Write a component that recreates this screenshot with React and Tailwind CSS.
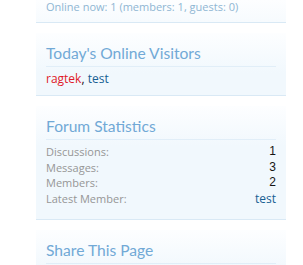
export default function App() {
  const panel =
    "mx-[36px] w-[250px] border-b border-[#d9e9f5] bg-[linear-gradient(to_bottom,#fdfeff_0px,#f1f8fd_40px)] px-[10px]";
  const heading =
    "border-b border-[#e1eef8] pb-[3px] font-['Lato','Open_Sans',sans-serif] text-[15.6px] leading-[20px] text-[#71a9d6]";
  const label = "text-[#969696]";
  const value = "text-[#141414] font-['Liberation_Sans',Arial,sans-serif] text-[12px]";
  return (
    <div className="h-[265px] w-[303px] overflow-hidden bg-white font-['Open_Sans','Liberation_Sans',sans-serif]">
      <div className={panel + " pb-[8px]"}>
        <div className="text-[11px] leading-[14px] text-[#8fb6d3]">
          Online now: 1 (members: 1, guests: 0)
        </div>
      </div>

      <div className={panel + " mt-[10px] pb-[8px] pt-[10px]"}>
        <h3 className={heading}>Today's Online Visitors</h3>
        <div className="mt-[4px] text-[12px] leading-[16px]">
          <span className="text-[#e0192a]">ragtek</span>
          <span className="text-[#141414]">, </span>
          <span className="text-[#176093]">test</span>
        </div>
      </div>

      <div className={panel + " mt-[10px] pb-[13px] pt-[10px]"}>
        <h3 className={heading}>Forum Statistics</h3>
        <dl className="mt-[4px] text-[11px] leading-[15.5px]">
          <div className="flex justify-between">
            <dt className={label}>Discussions:</dt>
            <dd className={value}>1</dd>
          </div>
          <div className="flex justify-between">
            <dt className={label}>Messages:</dt>
            <dd className={value}>3</dd>
          </div>
          <div className="flex justify-between">
            <dt className={label}>Members:</dt>
            <dd className={value}>2</dd>
          </div>
          <div className="flex justify-between">
            <dt className={label}>Latest Member:</dt>
            <dd className="text-[12px] text-[#176093]">test</dd>
          </div>
        </dl>
      </div>

      <div className={panel + " mt-[10px] pb-[10px] pt-[10px]"}>
        <h3 className={heading}>Share This Page</h3>
      </div>
    </div>
  );
}
